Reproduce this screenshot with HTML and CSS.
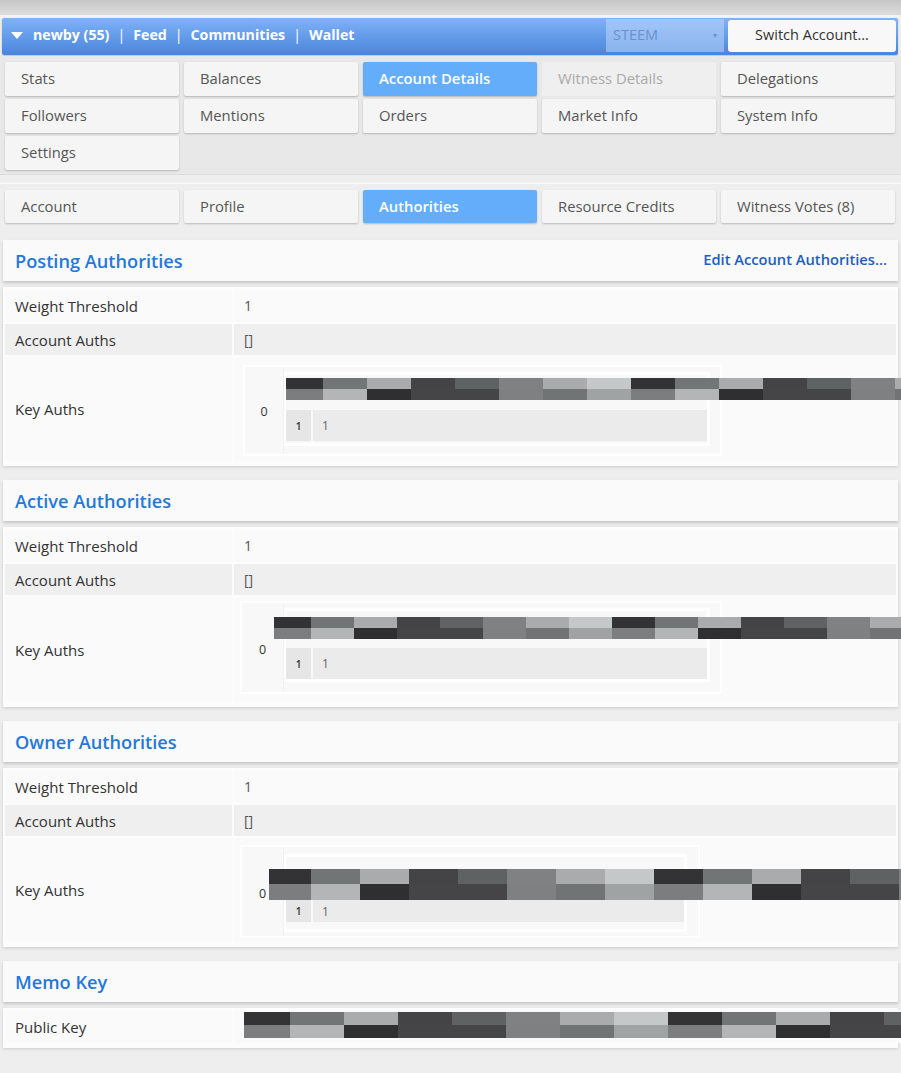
FILE: index.html
```html
<!DOCTYPE html>
<html>
<head>
<meta charset="utf-8">
<title>Account Authorities</title>
<link rel="stylesheet" href="styles.css">
</head>
<body>
<div class="topstrip"></div>
<nav class="navbar">
  <div class="nav-left">
    <svg class="caret" width="12" height="8" viewBox="0 0 12 8"><path d="M0 0 L12 0 L6 7 Z" fill="#fff"/></svg>
    <span>newby (55)</span><span class="sep">|</span><span>Feed</span><span class="sep">|</span><span>Communities</span><span class="sep">|</span><span>Wallet</span>
  </div>
  <div class="chain"><span>STEEM</span><span class="chain-arrow">▾</span></div>
  <div class="switch">Switch Account...</div>
</nav>

<div class="tabs tabs-main">
  <div class="tab">Stats</div>
  <div class="tab">Balances</div>
  <div class="tab active">Account Details</div>
  <div class="tab disabled">Witness Details</div>
  <div class="tab">Delegations</div>
  <div class="tab">Followers</div>
  <div class="tab">Mentions</div>
  <div class="tab">Orders</div>
  <div class="tab">Market Info</div>
  <div class="tab">System Info</div>
  <div class="tab">Settings</div>
</div>

<div class="tabs tabs-sub">
  <div class="tab">Account</div>
  <div class="tab">Profile</div>
  <div class="tab active">Authorities</div>
  <div class="tab">Resource Credits</div>
  <div class="tab">Witness Votes (8)</div>
</div>

<section class="auth auth-posting">
  <header class="sec-head"><h2>Posting Authorities</h2><a class="edit">Edit Account Authorities...</a></header>
  <div class="sec-body">
    <div class="row"><div class="lbl">Weight Threshold</div><div class="val">1</div></div>
    <div class="row alt"><div class="lbl">Account Auths</div><div class="val">[]</div></div>
    <div class="row keyrow"><div class="lbl">Key Auths</div><div class="val">
      <div class="keybox">
        <div class="keyidx">0</div>
        <div class="keyinner">
          <div class="strip"><i></i><i></i><i></i><i></i><i></i><i></i><i></i><i></i><i></i><i></i><i></i><i></i><i></i><i></i><i></i><i></i></div>
          <div class="wrow"><span class="widx">1</span><span class="wval">1</span></div>
        </div>
      </div>
    </div></div>
  </div>
</section>

<section class="auth auth-active">
  <header class="sec-head"><h2>Active Authorities</h2></header>
  <div class="sec-body">
    <div class="row"><div class="lbl">Weight Threshold</div><div class="val">1</div></div>
    <div class="row alt"><div class="lbl">Account Auths</div><div class="val">[]</div></div>
    <div class="row keyrow"><div class="lbl">Key Auths</div><div class="val">
      <div class="keybox">
        <div class="keyidx">0</div>
        <div class="keyinner">
          <div class="strip"><i></i><i></i><i></i><i></i><i></i><i></i><i></i><i></i><i></i><i></i><i></i><i></i><i></i><i></i><i></i><i></i></div>
          <div class="wrow"><span class="widx">1</span><span class="wval">1</span></div>
        </div>
      </div>
    </div></div>
  </div>
</section>

<section class="auth auth-owner">
  <header class="sec-head"><h2>Owner Authorities</h2></header>
  <div class="sec-body">
    <div class="row"><div class="lbl">Weight Threshold</div><div class="val">1</div></div>
    <div class="row alt"><div class="lbl">Account Auths</div><div class="val">[]</div></div>
    <div class="row keyrow"><div class="lbl">Key Auths</div><div class="val">
      <div class="keybox">
        <div class="keyidx">0</div>
        <div class="keyinner">
          <div class="strip"><i></i><i></i><i></i><i></i><i></i><i></i><i></i><i></i><i></i><i></i><i></i><i></i><i></i><i></i><i></i><i></i></div>
          <div class="wrow"><span class="widx">1</span><span class="wval">1</span></div>
        </div>
      </div>
    </div></div>
  </div>
</section>

<section class="auth auth-memo">
  <header class="sec-head"><h2>Memo Key</h2></header>
  <div class="sec-body">
    <div class="row memorow"><div class="lbl">Public Key</div><div class="val">
      <div class="strip"><i></i><i></i><i></i><i></i><i></i><i></i><i></i><i></i><i></i><i></i><i></i><i></i><i></i><i></i></div>
    </div></div>
  </div>
</section>
</body>
</html>
```

FILE: styles.css
```css
html, body { margin: 0; padding: 0; }
body {
  width: 901px;
  min-height: 1073px;
  overflow-x: hidden;
  background: #eeeeee;
  font-family: "Open Sans", "Noto Sans", sans-serif;
  font-size: 15px;
  color: #444;
}

.topstrip {
  height: 15px;
  background: linear-gradient(#c6c6c6, #dcdcdc);
  border-bottom: 3px solid #f2f2f2;
}

.navbar {
  margin: 0 3px 0 2px;
  height: 37px;
  display: flex;
  align-items: center;
  background: linear-gradient(#7fb3f7, #4a84dc);
  border-radius: 2px;
  box-shadow: 0 1px 2px rgba(0,0,0,0.2);
}
.nav-left {
  flex: 1;
  display: flex;
  align-items: center;
  padding-left: 9px;
  padding-bottom: 4px;
  color: #fff;
  font-weight: 700;
  font-size: 14.2px;
}
.caret { margin-right: 10px; margin-top: 2px; }
.sep { margin: 0 8px; font-weight: 400; }
.chain {
  width: 118px;
  height: 33px;
  margin-right: 4px;
  margin-bottom: 2px;
  box-sizing: border-box;
  padding: 0 7px 2px;
  display: flex;
  align-items: center;
  justify-content: space-between;
  background: rgba(190, 215, 250, 0.55);
  color: #6a91cc;
  font-size: 14.5px;
}
.chain-arrow { font-size: 8px; color: #6a91cc; }
.switch {
  width: 168px;
  height: 32px;
  margin-right: 2px;
  margin-bottom: 2px;
  padding-bottom: 2px;
  box-sizing: border-box;
  display: flex;
  align-items: center;
  justify-content: center;
  background: #f8f8f8;
  border-radius: 3px;
  color: #333;
  font-size: 14.5px;
}

.tabs {
  display: grid;
  grid-template-columns: repeat(5, 1fr);
  gap: 3px 5px;
}
.tabs-main {
  margin-top: 1px;
  padding: 6px 6px 4px 5px;
  background: #e8e8e8;
  border-bottom: 1px solid #dcdcdc;
}
.tabs-sub {
  margin-top: 8px;
  padding: 6px 6px 5px 5px;
  background: #eeeeee;
  border-top: 1px solid #fafafa;
}
.tab {
  height: 34px;
  box-sizing: border-box;
  padding-left: 16px;
  padding-bottom: 2px;
  display: flex;
  align-items: center;
  background: #f5f5f5;
  border-radius: 2px;
  box-shadow: 0 1px 2px rgba(0,0,0,0.22);
  color: #555;
  font-size: 14.8px;
}
.tabs-sub .tab { height: 33px; }
.tab.active {
  background: #63adfa;
  color: #fff;
  font-weight: 600;
}
.tab.disabled {
  background: #efefef;
  color: #aaa;
  box-shadow: none;
}

.auth { margin: 0 3px 14px 3px; }
.tabs-sub + .auth { margin-top: 12px; }
.sec-head {
  height: 41px;
  box-sizing: border-box;
  padding: 0 11px 0 12px;
  display: flex;
  align-items: center;
  justify-content: space-between;
  background: #fafafa;
  box-shadow: 0 2px 3px rgba(0,0,0,0.18);
}
.sec-head h2 {
  margin: 0;
  font-size: 18.2px;
  font-weight: 600;
  color: #2478d8;
}
.edit {
  font-size: 14.7px;
  font-weight: 600;
  color: #1d5ec0;
  margin-bottom: 4px;
}
.sec-body {
  margin-top: 6px;
  padding: 2px 2px 5px 2px;
  background: #fcfcfc;
  box-shadow: 0 1px 3px rgba(0,0,0,0.15);
  display: flex;
  flex-direction: column;
  gap: 2px;
}
.row {
  display: grid;
  grid-template-columns: 227px 1fr;
  column-gap: 2px;
  min-height: 33px;
}
.row.alt { min-height: 31px; }
.lbl, .val {
  display: flex;
  align-items: center;
  background: #fafafa;
}
.lbl { padding-left: 10px; color: #333; }
.val { padding-left: 10px; color: #555; font-size: 14px; }
.row.alt .lbl, .row.alt .val { background: #efefef; }

.keyrow { height: 104px; }
.keyrow .val { padding-left: 9px; align-items: flex-start; }
.keybox {
  margin-top: 8px;
  width: 479px;
  height: 91px;
  box-sizing: border-box;
  border: 2px solid #fff;
  background: #f8f8f8;
  display: flex;
}
.keyidx {
  width: 38px;
  display: flex;
  align-items: center;
  justify-content: center;
  border-right: 1px solid #f0f0f0;
  font-size: 12.5px;
  color: #333;
  padding-top: 1px;
}
.keyinner {
  margin-top: 5px;
  width: 426px;
  height: 74px;
  box-sizing: border-box;
  border: 3px solid #fff;
  border-left-width: 2px;
  padding-top: 3px;
  display: flex;
  flex-direction: column;
  gap: 10px;
}
.wrow {
  display: flex;
  gap: 2px;
  height: 31px;
}
.widx {
  width: 25px;
  display: flex;
  align-items: center;
  justify-content: center;
  background: #e6e6e6;
  font-size: 10px;
  font-weight: 600;
  color: #333;
}
.wval {
  flex: 1;
  display: flex;
  align-items: center;
  padding-left: 9px;
  background: #ebebeb;
  font-size: 12px;
  color: #666;
}

/* redaction strip over the public keys */
.strip {
  display: flex;
  flex-shrink: 0;
  width: max-content;
  height: 22px;
}
.strip i {
  display: block;
  flex-shrink: 0;
  width: 44px;
  height: 100%;
}
.strip i:first-child { width: 37px; }
.strip i:nth-child(8n+1) { background: linear-gradient(#333335 50%, #7b7d7e 50%); }
.strip i:nth-child(8n+2) { background: linear-gradient(#727576 50%, #b3b5b6 50%); }
.strip i:nth-child(8n+3) { background: linear-gradient(#a9abac 50%, #2f2f31 50%); }
.strip i:nth-child(8n+4) { background: linear-gradient(#444446 50%, #454547 50%); }
.strip i:nth-child(8n+5) { background: linear-gradient(#5e6262 50%, #454547 50%); }
.strip i:nth-child(8n+6) { background: linear-gradient(#7f8182 50%, #7e8081 50%); }
.strip i:nth-child(8n+7) { background: linear-gradient(#a9abac 50%, #717475 50%); }
.strip i:nth-child(8n+8) { background: linear-gradient(#c5c8c9 50%, #a0a3a4 50%); }

/* Active */
.auth-active .keyrow { height: 105px; }
.auth-active .keyrow .val { padding-left: 6px; }
.auth-active .keybox { margin-top: 4px; width: 482px; height: 93px; }
.auth-active .keyidx { width: 41px; padding-top: 4px; }
.auth-active .strip { margin-left: -12px; }
.auth-active .strip i { width: 43px; }
.auth-active .strip i:first-child { width: 37px; }
.auth-active .keyinner { padding-top: 6px; gap: 9px; }

/* Owner */
.auth-owner .keyrow { height: 104px; }
.auth-owner .keyrow .val { padding-left: 6px; }
.auth-owner .keybox { margin-top: 7px; width: 460px; height: 93px; }
.auth-owner .keyidx { width: 41px; padding-top: 3px; }
.auth-owner .keyinner { width: 403px; height: 78px; margin-top: 7px; padding-top: 12px; gap: 0; }
.auth-owner .strip { margin-left: -17px; height: 31px; }
.auth-owner .strip i { width: 49px; }
.auth-owner .strip i:first-child { width: 42px; }
.auth-owner .wrow { height: 22px; }

/* Memo */
.memorow { height: 33px; }
.memorow .val { align-items: flex-start; }
.auth-memo .strip { margin-top: 2px; height: 26px; }
.auth-memo .strip i { width: 54px; }
.auth-memo .strip i:first-child { width: 46px; }
```
